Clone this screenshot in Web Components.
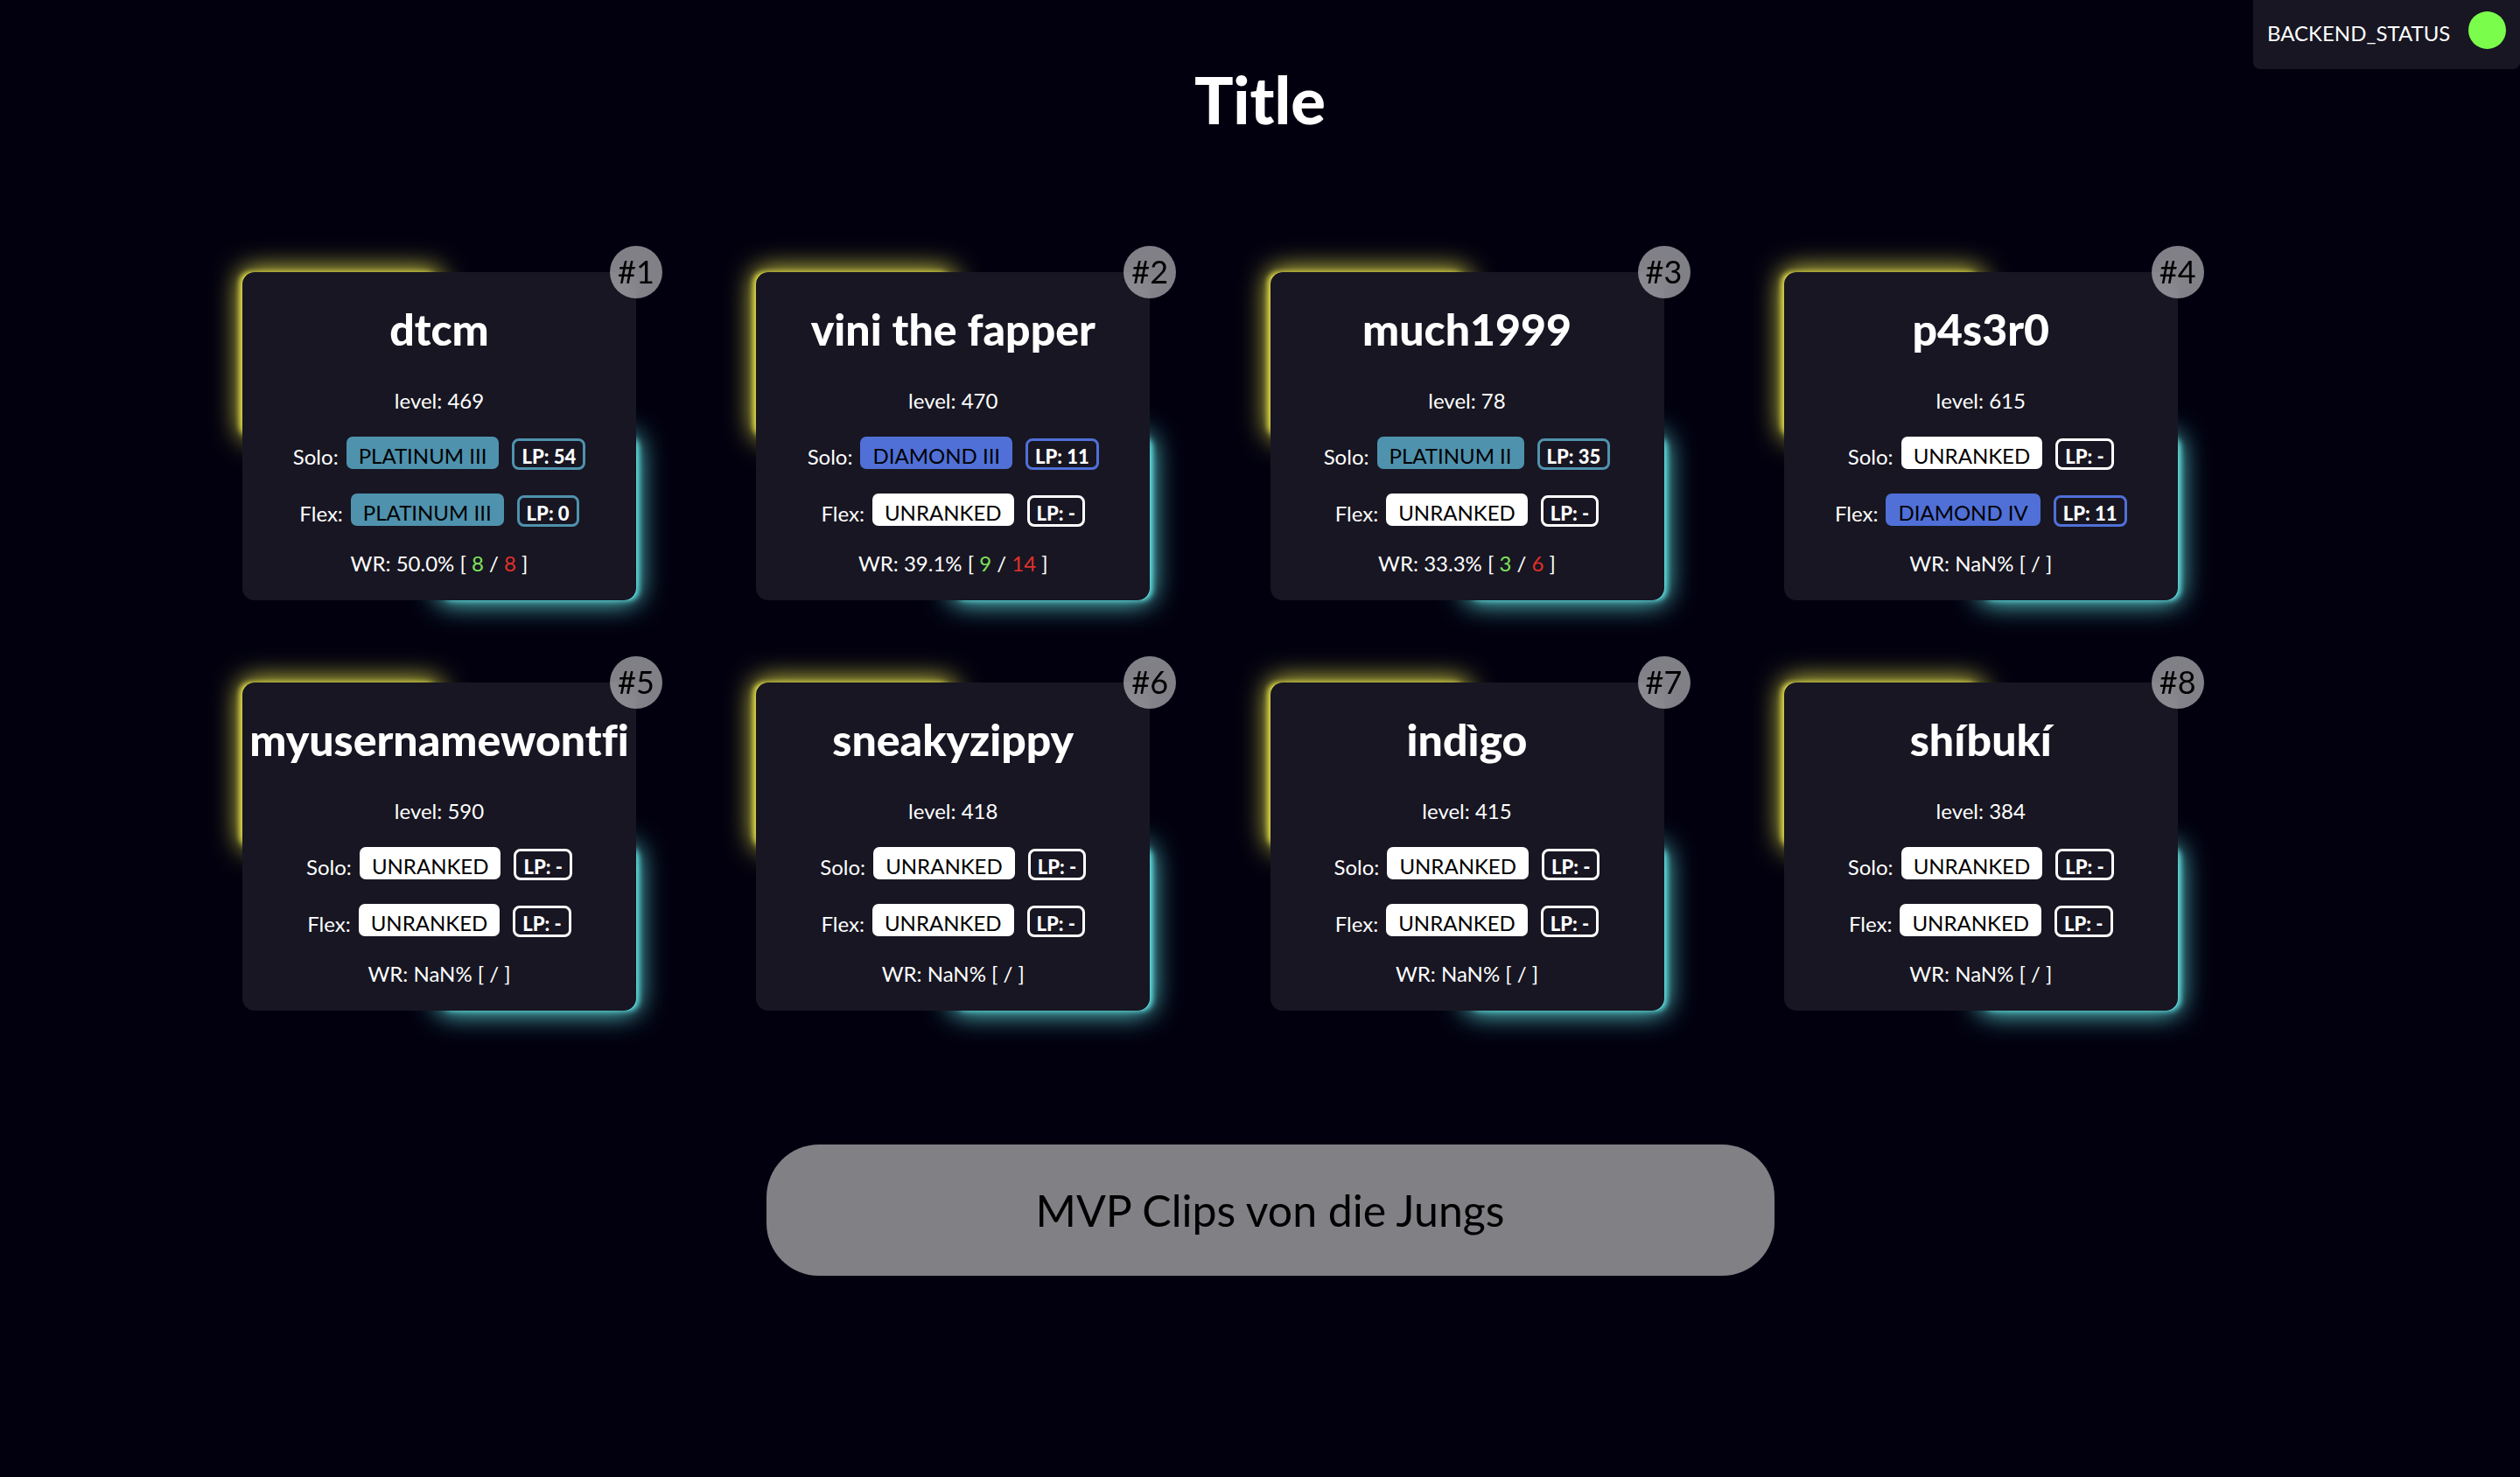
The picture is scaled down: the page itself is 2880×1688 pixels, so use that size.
<!DOCTYPE html>
<html lang="de">
<head>
<meta charset="utf-8">
<title>Title</title>
<style>
  html { background: #02000f; }
  body { margin: 0; background: #02000f; color: #fff; font-family: Lato, "Open Sans", sans-serif; font-size: 24px; font-variant-ligatures: none; }
</style>
</head>
<body>
<squad-page></squad-page>

<template id="status-tpl">
  <style>
    :host { display: flex; justify-content: space-between; gap: 20px; box-sizing: border-box; min-width: 305px; height: 79px; padding: 13px 16px 0; background: #171622; border-radius: 0 0 8px 8px; line-height: 50px; }
    i { width: 43px; height: 43px; border-radius: 50%; background: #7bfd4c; }
  </style>
  <slot></slot><i></i>
</template>

<template id="rank-tpl">
  <style>
    :host { display: flex; justify-content: center; align-items: flex-start; height: 65px; --tier: #fff; }
    :host([tier="platinum"]) { --tier: #4f92ae; }
    :host([tier="diamond"]) { --tier: #5070d8; }
    .label { line-height: 30px; padding-top: 8px; margin-right: 9px; }
    .tier { height: 37px; padding: 0 14px; border-radius: 7px; background: var(--tier); color: #000; line-height: 44px; margin-right: 15px; }
    .lp { box-sizing: border-box; height: 36px; margin-top: 2px; padding: 0 8px; border: 3px solid var(--tier); border-radius: 8px; font-size: 22px; font-weight: 900; line-height: 35px; }
  </style>
  <span class="label"><slot name="queue"></slot></span>
  <span class="tier"><slot name="tier"></slot></span>
  <span class="lp"><slot name="lp"></slot></span>
</template>

<template id="card-tpl">
  <style>
    :host { display: block; position: relative; z-index: 0; width: 450px; }
    :host::before, :host::after { content: ""; position: absolute; z-index: -1; width: 50%; height: 50%; border-radius: 12px; }
    :host::before { left: 0; top: 0; background: #e4e04a; box-shadow: -3px 0 6px #e4e04a, 0 0 30px 3px #e4e04a; }
    :host::after { right: 0; bottom: 0; background: #62e4e4; box-shadow: 3px 0 6px #62e4e4, 0 0 30px 3px #62e4e4; }
    article { box-sizing: border-box; height: 375px; padding-top: 35px; background: #171622; border-radius: 14px; text-align: center; }
    h2 { margin: 0; font-size: 50px; line-height: 60px; font-weight: 900; white-space: nowrap; }
    p { margin: 0; line-height: 30px; }
    .level { margin: 37px 0 26px; }
    .win { color: #7fe05a; }
    .loss { color: #e0302a; }
    .place { position: absolute; right: -30px; top: -30px; width: 60px; height: 60px; box-sizing: border-box; padding-left: 9px; border-radius: 50%; background: rgba(255,255,255,.5); backdrop-filter: blur(10px); color: #000; font-size: 36px; line-height: 58px; }
  </style>
  <article>
    <h2></h2>
    <p class="level"></p>
    <div class="ranks"></div>
    <p class="wr"></p>
  </article>
  <span class="place"></span>
</template>

<template id="page-tpl">
  <style>
    :host { display: block; min-height: 100vh; }
    header { position: relative; }
    status-badge { position: absolute; right: 0; top: 0; }
    h1 { margin: 0; padding-top: 69px; text-align: center; font-size: 74px; line-height: 90px; font-weight: 900; }
    main { display: flex; flex-direction: column; align-items: center; padding: 152px 0 0 23px; }
    .grid { display: grid; grid-template-columns: repeat(4, 1fr); row-gap: 94px; width: 2349px; max-width: 100%; }
    button { margin-top: 153px; width: 40vw; height: 150px; border: 0; border-radius: 60px; background: #808085; color: #000; font: inherit; font-size: 50px; }
  </style>
  <header><h1>Title</h1><status-badge>BACKEND_STATUS</status-badge></header>
  <main>
    <div class="grid"></div>
    <button type="button">MVP Clips von die Jungs</button>
  </main>
</template>

<script>
  const stamp = (host, id) => {
    const root = host.attachShadow({ mode: "open" });
    root.append(document.getElementById(id).content.cloneNode(true));
    return root;
  };
  const U = ["UNRANKED", "-"];
  const players = [
    ["dtcm", 469, ["PLATINUM III", 54], ["PLATINUM III", 0], "50.0", 8, 8],
    ["vini the fapper", 470, ["DIAMOND III", 11], U, "39.1", 9, 14],
    ["much1999", 78, ["PLATINUM II", 35], U, "33.3", 3, 6],
    ["p4s3r0", 615, U, ["DIAMOND IV", 11], "NaN"],
    ["myusernamewontfi", 590, U, U, "NaN"],
    ["sneakyzippy", 418, U, U, "NaN"],
    ["indìgo", 415, U, U, "NaN"],
    ["shíbukí", 384, U, U, "NaN"]
  ];

  customElements.define("status-badge", class extends HTMLElement {
    constructor() { super(); stamp(this, "status-tpl"); }
  });
  customElements.define("rank-row", class extends HTMLElement {
    constructor() { super(); stamp(this, "rank-tpl"); }
  });
  customElements.define("player-card", class extends HTMLElement {
    constructor() { super(); this.root = stamp(this, "card-tpl"); }
    set player([place, name, level, solo, flex, rate, wins, losses]) {
      const $ = s => this.root.querySelector(s);
      $("h2").textContent = name;
      $(".level").textContent = "level: " + level;
      $(".place").textContent = "#" + place;
      $(".ranks").innerHTML = [["Solo:", solo], ["Flex:", flex]].map(([q, [tier, lp]]) =>
        `<rank-row tier="${tier.split(" ")[0].toLowerCase()}"><span slot="queue">${q}</span><span slot="tier">${tier}</span><span slot="lp">LP: ${lp}</span></rank-row>`).join("");
      $(".wr").innerHTML = wins === undefined ? `WR: ${rate}% [ / ]`
        : `WR: ${rate}% [ <span class="win">${wins}</span> / <span class="loss">${losses}</span> ]`;
    }
  });
  customElements.define("squad-page", class extends HTMLElement {
    constructor() {
      super();
      const grid = stamp(this, "page-tpl").querySelector(".grid");
      players.forEach((p, i) => {
        const card = document.createElement("player-card");
        grid.append(card);
        card.player = [i + 1, ...p];
      });
    }
  });
</script>
</body>
</html>
